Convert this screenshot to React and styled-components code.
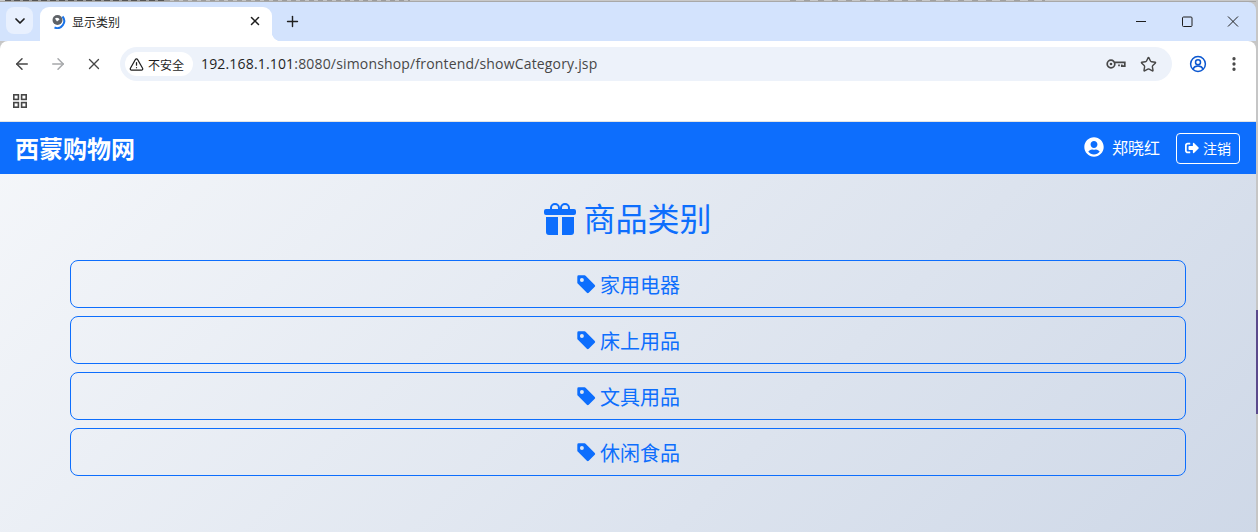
import React from "react";
import styled, { createGlobalStyle } from "styled-components";
import { BsGiftFill, BsTagFill } from "react-icons/bs";
import { FaUserCircle, FaSignOutAlt } from "react-icons/fa";
import { ArrowLeft, ArrowRight, X, Plus, ChevronDown, Star, TriangleAlert, EllipsisVertical } from "lucide-react";

const categories = ["家用电器", "床上用品", "文具用品", "休闲食品"];

function App() {
	return (
		<>
			<GlobalStyle />
			<Screen>
				<Browser>
					<BehindEdge />
					<TabStrip>
						<TabMenu>
							<ChevronDown size={16} strokeWidth={2.6} />
						</TabMenu>
						<Tab>
							<Favicon viewBox="0 0 16 16">
								<circle cx="7.5" cy="7" r="5" fill="#5f6368" />
								<path d="M5 5.5c2-1.5 4-.5 4.5 1L7 8.5z" fill="#fff" />
								<path d="M12.5 3.5a7 7 0 0 1-8 11" fill="none" stroke="#1a73e8" strokeWidth="2" />
							</Favicon>
							<TabTitle>显示类别</TabTitle>
							<TabClose>
								<X size={14} strokeWidth={2.6} />
							</TabClose>
						</Tab>
						<NewTab>
							<Plus size={17} strokeWidth={2} />
						</NewTab>
						<WindowControls>
							<WindowButton>
								<svg width="12" height="12" viewBox="0 0 12 12">
									<path d="M1 5.5h10" stroke="#1f1f1f" strokeWidth="1" />
								</svg>
							</WindowButton>
							<WindowButton>
								<svg width="12" height="12" viewBox="0 0 12 12">
									<rect x="1.5" y="1" width="9.5" height="9.5" rx="1" fill="none" stroke="#1f1f1f" />
								</svg>
							</WindowButton>
							<WindowButton>
								<svg width="12" height="12" viewBox="0 0 12 12">
									<path d="M1 .5l10 10M11 .5l-10 10" stroke="#1f1f1f" strokeWidth="1" />
								</svg>
							</WindowButton>
						</WindowControls>
					</TabStrip>
					<Toolbar>
						<NavButton>
							<ArrowLeft size={18} strokeWidth={2} />
						</NavButton>
						<NavButton $dim>
							<ArrowRight size={18} strokeWidth={2} />
						</NavButton>
						<NavButton>
							<X size={18} strokeWidth={1.8} />
						</NavButton>
						<AddressBar>
							<SecurityChip>
								<TriangleAlert size={15} strokeWidth={2} />
								不安全
							</SecurityChip>
							<Url>
								192.168.1.101<UrlRest>:8080/simonshop/frontend/showCategory.jsp</UrlRest>
							</Url>
							<AddressIcon>
								<svg width="20" height="14" viewBox="0 0 20 14" fill="none" stroke="#474747" strokeWidth="1.7">
									<circle cx="5" cy="7" r="3.8" />
									<path d="M8.8 5.4h10v3.8h-3v-1.6M13 7.5v1.7" />
									<circle cx="5" cy="7" r="1.3" fill="#474747" stroke="none" />
								</svg>
							</AddressIcon>
							<AddressIcon>
								<Star size={17} strokeWidth={2} />
							</AddressIcon>
						</AddressBar>
						<ProfileButton>
							<svg width="18" height="18" viewBox="0 0 18 18" fill="none" stroke="#0b57d0" strokeWidth="1.5">
								<circle cx="9" cy="9" r="7.4" />
								<circle cx="9" cy="7.2" r="2.5" />
								<path d="M4 14c1-2.4 3-3 5-3s4 .6 5 3" />
							</svg>
						</ProfileButton>
						<NavButton>
							<EllipsisVertical size={18} strokeWidth={2.4} />
						</NavButton>
					</Toolbar>
					<BookmarkBar>
						<svg width="14" height="14" viewBox="0 0 14 14" fill="none" stroke="#474747" strokeWidth="1.6">
							<rect x=".8" y=".8" width="4.6" height="4.6" />
							<rect x="8.6" y=".8" width="4.6" height="4.6" />
							<rect x=".8" y="8.6" width="4.6" height="4.6" />
							<rect x="8.6" y="8.6" width="4.6" height="4.6" />
						</svg>
					</BookmarkBar>
					<Page>
						<Navbar>
							<Brand>西蒙购物网</Brand>
							<UserArea>
								<UserName>
									<FaUserCircle size={20} />
									郑晓红
								</UserName>
								<LogoutButton>
									<FaSignOutAlt size={14} />
									注销
								</LogoutButton>
							</UserArea>
						</Navbar>
						<Content>
							<Heading>
								<GiftIcon size={32} />
								商品类别
							</Heading>
							<CategoryList>
								{categories.map((name) => (
									<CategoryButton key={name}>
										<BsTagFill size={21} />
										{name}
									</CategoryButton>
								))}
							</CategoryList>
						</Content>
					</Page>
				</Browser>
				<ScreenEdge>
					<EdgeAccent />
				</ScreenEdge>
			</Screen>
		</>
	);
}

const GlobalStyle = createGlobalStyle`
	* {
		box-sizing: border-box;
	}
	body {
		margin: 0;
		font-family: "Noto Sans CJK SC", "Liberation Sans", sans-serif;
	}
`;
const Screen = styled.div`
	display: flex;
	width: 1258px;
	height: 532px;
	overflow: hidden;
	background: #c6c6c6;
`;
const Browser = styled.div`
	display: flex;
	flex-direction: column;
	flex: 1;
	min-width: 0;
`;
/* the bottoms of the letters of the window behind this one */
const BehindEdge = styled.div`
	height: 2px;
	border-bottom: 1px solid #a8a8a8;
	background:
		repeating-linear-gradient(90deg, #555 0 6px, #999 6px 9px) 5px 0 / 160px 1px no-repeat,
		repeating-linear-gradient(90deg, #9c9c9c 0 5px, #c4c4c4 5px 9px) 165px 0 / 245px 1px no-repeat,
		repeating-linear-gradient(90deg, #a0a0a0 0 6px, #c8c8c8 6px 14px) 790px 0 / 255px 1px no-repeat,
		#c8c8c8;
`;
const TabStrip = styled.div`
	display: flex;
	align-items: flex-end;
	height: 39px;
	padding-left: 6px;
	background: #d3e3fd;
	border-top-right-radius: 8px;
`;
const TabMenu = styled.div`
	display: flex;
	align-items: center;
	justify-content: center;
	width: 27px;
	height: 27px;
	margin-bottom: 7px;
	border-radius: 8px;
	background: #e8f0fe;
	color: #1f1f1f;
`;
const Tab = styled.div`
	position: relative;
	display: flex;
	align-items: center;
	width: 232px;
	height: 34px;
	margin-left: 7px;
	padding: 0 10px 6px;
	background: #fff;
	border-radius: 9px 9px 0 0;
	&::after {
		content: "";
		position: absolute;
		right: -9px;
		bottom: 0;
		width: 9px;
		height: 9px;
		background: radial-gradient(circle at 100% 0, transparent 9px, #fff 9.5px);
	}
`;
const Favicon = styled.svg`
	width: 16px;
	height: 16px;
	flex: none;
`;
const TabTitle = styled.span`
	flex: 1;
	margin-left: 6px;
	font-size: 12px;
	color: #1f1f1f;
`;
const TabClose = styled.span`
	display: flex;
	color: #1f1f1f;
`;
const NewTab = styled.div`
	display: flex;
	align-items: center;
	justify-content: center;
	width: 28px;
	height: 28px;
	margin: 0 0 6px 6px;
	color: #1f1f1f;
`;
const WindowControls = styled.div`
	display: flex;
	align-self: stretch;
	margin-left: auto;
`;
const WindowButton = styled.div`
	display: flex;
	align-items: center;
	justify-content: center;
	width: 46px;
`;
const Toolbar = styled.div`
	display: flex;
	align-items: center;
	height: 46px;
	padding: 6px 4px;
	background: #fff;
	border-radius: 8px 8px 0 0;
`;
const NavButton = styled.div`
	display: flex;
	align-items: center;
	justify-content: center;
	width: 36px;
	height: 34px;
	color: ${(p) => (p.$dim ? "#a6a8ab" : "#474747")};
`;
const AddressBar = styled.div`
	display: flex;
	align-items: center;
	flex: 1;
	height: 34px;
	margin: 0 8px;
	padding: 0 8px 0 5px;
	background: #edf2fa;
	border-radius: 17px;
`;
const SecurityChip = styled.div`
	display: flex;
	align-items: center;
	gap: 4px;
	width: 68px;
	height: 24px;
	padding-left: 4px;
	background: #fff;
	border-radius: 12px;
	font-size: 12px;
	color: #1f1f1f;
	white-space: nowrap;
	svg {
		flex: none;
	}
`;
const Url = styled.div`
	flex: 1;
	margin-left: 8px;
	padding-bottom: 2px;
	font-family: "Open Sans", "Liberation Sans", sans-serif;
	font-size: 14px;
	letter-spacing: 0.17px;
	color: #1f1f1f;
`;
const UrlRest = styled.span`
	color: #474747;
`;
const AddressIcon = styled.div`
	display: flex;
	align-items: center;
	justify-content: center;
	width: 32px;
	height: 28px;
	color: #474747;
`;
const ProfileButton = styled(NavButton)`
	color: #0b57d0;
`;
const BookmarkBar = styled.div`
	display: flex;
	align-items: center;
	height: 35px;
	padding: 0 0 6px 13px;
	background: #fff;
	border-bottom: 1px solid #e3e3e3;
`;
const Page = styled.div`
	flex: 1;
	min-height: 0;
	background: linear-gradient(135deg, #f5f7fa 0%, #c3cfe2 100%) 0 0 / 100% 900px no-repeat;
`;
const Navbar = styled.nav`
	display: flex;
	align-items: center;
	justify-content: space-between;
	height: 52px;
	padding: 0 16px 0 15px;
	background: #0d6efd;
	color: #fff;
`;
const Brand = styled.div`
	padding-bottom: 2px;
	font-size: 24px;
	font-weight: 700;
`;
const UserArea = styled.div`
	display: flex;
	align-items: center;
	gap: 15px;
`;
const UserName = styled.div`
	display: flex;
	align-items: center;
	gap: 8px;
	margin-right: 1px;
	padding-bottom: 2px;
	font-size: 16px;
`;
const LogoutButton = styled.button`
	display: flex;
	align-items: center;
	justify-content: center;
	gap: 4px;
	width: 64px;
	height: 31px;
	padding: 0;
	background: transparent;
	border: 1px solid #fff;
	border-radius: 4px;
	color: #fff;
	font-family: inherit;
	font-size: 14px;
`;
const Content = styled.main`
	width: 1116px;
	margin: 0 auto;
	padding-top: 20px;
`;
const Heading = styled.h2`
	display: flex;
	align-items: center;
	justify-content: center;
	gap: 7px;
	height: 46px;
	margin: 0 0 20px;
	font-size: 32px;
	font-weight: 400;
	color: #0d6efd;
`;
const GiftIcon = styled(BsGiftFill)`
	margin-top: 4px;
`;
const CategoryList = styled.div`
	display: flex;
	flex-direction: column;
	gap: 8px;
`;
const CategoryButton = styled.button`
	display: flex;
	align-items: center;
	justify-content: center;
	gap: 3px;
	height: 48px;
	padding: 0 16px;
	background: transparent;
	border: 1px solid #0d6efd;
	border-radius: 8px;
	color: #0d6efd;
	font-family: inherit;
	font-size: 20px;
`;
const ScreenEdge = styled.div`
	width: 2px;
	padding-top: 310px;
`;
const EdgeAccent = styled.div`
	height: 104px;
	background: #5b4a8c;
`;

export default App;
